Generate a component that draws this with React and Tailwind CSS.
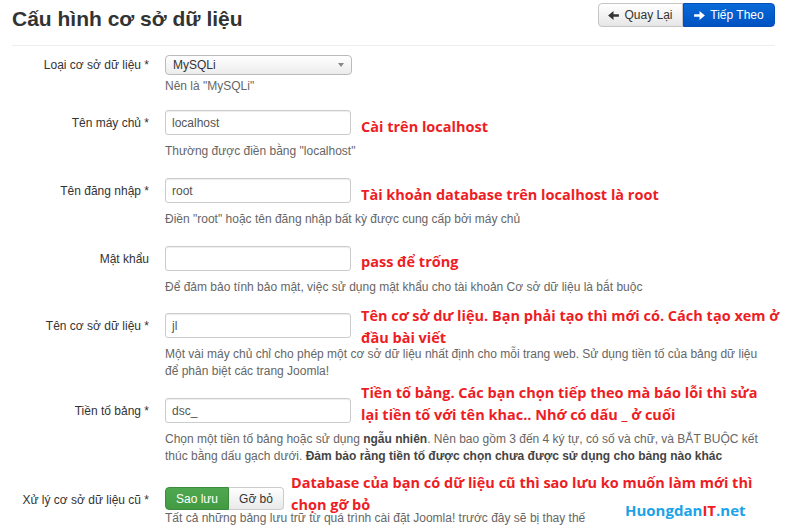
import React from "react";

/* ================= SMALL PIECES ================= */
function ArrowIcon({ dir = "right", className = "" }) {
  return (
    <svg viewBox="0 0 12 10" className={`w-[11px] h-[9px] ${className}`} fill="currentColor">
      {dir === "right" ? (
        <path d="M0 3.5h6V0l6 5-6 5V6.5H0z" />
      ) : (
        <path d="M12 3.5H6V0L0 5l6 5V6.5h6z" />
      )}
    </svg>
  );
}

function Note({ top, left = 196, children }) {
  return (
    <div
      className="absolute whitespace-nowrap text-[14.5px] leading-[22px] font-bold text-[#ee1d25]"
      style={{ top, left, fontFamily: '"Open Sans", "Noto Sans", sans-serif' }}
    >
      {children}
    </div>
  );
}

function Row({ label, children, help, note, noteTop, noteLeft, className = "", helpClass = "mt-[8px]" }) {
  return (
    <div className={`flex ${className}`}>
      <div className="w-[153px] shrink-0 pr-4 text-right text-[12px] text-[#333] flex items-center justify-end h-[25px] whitespace-nowrap">
        {label}
      </div>
      <div className="flex-1">
        <div className="relative">
          {children}
          {note && (
            <Note top={noteTop} left={noteLeft}>
              {note}
            </Note>
          )}
        </div>
        {help && (
          <div className={`${helpClass} text-[12px] leading-[17px] text-[#666]`}>{help}</div>
        )}
      </div>
    </div>
  );
}

function TextInput({ value }) {
  return (
    <div className="w-[186px] h-[25px] border border-[#ccc] rounded-[3px] bg-white px-[6px] flex items-center text-[12px] text-[#555] shadow-[inset_0_1px_1px_rgba(0,0,0,0.075)]">
      {value}
    </div>
  );
}

/* ================= MAIN ================= */
export default function App() {
  return (
    <div
      className="w-[800px] h-[527px] bg-white overflow-hidden relative"
      style={{ fontFamily: '"Liberation Sans", Arial, sans-serif' }}
    >
      <div className="ml-3 w-[763px]">
        {/* HEADER */}
        <div className="flex justify-between items-start h-[46px] border-b border-[#eee] pt-[3px]">
          <h1 className="text-[21px] leading-[24px] font-bold text-[#333] mt-[4px]">
            Cấu hình cơ sở dữ liệu
          </h1>
          <div className="flex text-[12px]">
            <button className="h-[24px] w-[85px] flex items-center justify-center gap-[5px] border border-[#c5c5c5] rounded-l-[4px] bg-gradient-to-b from-white to-[#e6e6e6] text-[#333]">
              <ArrowIcon dir="left" />
              Quay Lại
            </button>
            <button className="h-[24px] w-[92px] flex items-center justify-center gap-[5px] border border-[#0050b8] rounded-r-[4px] bg-gradient-to-b from-[#0a6ad8] to-[#0052c2] text-white">
              <ArrowIcon />
              Tiếp Theo
            </button>
          </div>
        </div>

        {/* FORM */}
        <div className="flex mt-[9px]">
          <div className="w-[153px] shrink-0 pr-4 text-right text-[12px] text-[#333] flex items-center justify-end h-[20px] whitespace-nowrap">
            Loại cơ sở dữ liệu *
          </div>
          <div>
            <div className="w-[187px] h-[20px] border border-[#bbb] rounded-[4px] bg-gradient-to-b from-white to-[#ececec] flex items-center justify-between px-[7px] text-[12px] text-[#333]">
              MySQLi
              <span className="w-0 h-0 border-l-[3px] border-r-[3px] border-t-[4px] border-l-transparent border-r-transparent border-t-[#888]" />
            </div>
            <div className="mt-[3px] text-[12px] leading-[17px] text-[#666]">Nên là "MySQLi"</div>
          </div>
        </div>

        <Row
          className="mt-[15px]"
          label="Tên máy chủ *"
          help='Thường được điền bằng "localhost"'
          note="Cài trên localhost"
          noteTop={6}
        >
          <TextInput value="localhost" />
        </Row>

        <Row
          className="mt-[18px]"
          label="Tên đăng nhập *"
          help='Điền "root" hoặc tên đăng nhập bất kỳ được cung cấp bởi máy chủ'
          note="Tài khoản database trên localhost là root"
          noteTop={6}
        >
          <TextInput value="root" />
        </Row>

        <Row
          className="mt-[18px]"
          label="Mật khẩu"
          help="Để đảm bảo tính bảo mật, việc sử dụng mật khẩu cho tài khoản Cơ sở dữ liệu là bắt buộc"
          note="pass để trống"
          noteTop={5}
        >
          <TextInput value="" />
        </Row>

        <Row
          className="mt-[17px]"
          label="Tên cơ sở dữ liệu *"
          help={
            <>
              Một vài máy chủ chỉ cho phép một cơ sở dữ liệu nhất định cho mỗi trang web. Sử dụng tiền tố của bảng dữ liệu
              <br />
              để phân biệt các trang Joomla!
            </>
          }
          note={
            <>
              Tên cơ sở dư liệu. Bạn phải tạo thì mới có. Cách tạo xem ở
              <br />
              đầu bài viết
            </>
          }
          noteTop={-8}
        >
          <TextInput value="jl" />
        </Row>

        <Row
          className="mt-[18px]"
          label="Tiền tố bảng *"
          help={
            <>
              Chọn một tiền tố bảng hoặc sử dụng <b className="text-[#444]">ngẫu nhiên</b>. Nên bao gồm 3 đến 4 ký tự, có số và chữ, và BẮT BUỘC kết
              <br />
              thúc bằng dấu gạch dưới. <b className="text-[#444]">Đảm bảo rằng tiền tố được chọn chưa được sử dụng cho bảng nào khác</b>
            </>
          }
          note={
            <>
              Tiền tố bảng. Các bạn chọn tiếp theo mà báo lỗi thì sửa
              <br />
              lại tiền tố với tên khac.. Nhớ có dấu _ ở cuối
            </>
          }
          noteTop={-16}
        >
          <TextInput value="dsc_" />
        </Row>

        <Row
          className="mt-[22px]"
          label="Xử lý cơ sở dữ liệu cũ *"
          help="Tất cả những bảng lưu trữ từ quá trình cài đặt Joomla! trước đây sẽ bị thay thế"
          helpClass="mt-0"
          note={
            <>
              Database của bạn có dữ liệu cũ thì sao lưu ko muốn làm mới thì
              <br />
              chọn gỡ bỏ
            </>
          }
          noteTop={-15}
          noteLeft={126}
        >
          <div className="flex h-[23px] text-[12px]">
            <div className="w-[64px] flex items-center justify-center rounded-l-[4px] border border-[#3d8b3d] bg-gradient-to-b from-[#4fa84f] to-[#439a43] text-white">
              Sao lưu
            </div>
            <div className="w-[55px] flex items-center justify-center rounded-r-[4px] border border-l-0 border-[#ccc] bg-gradient-to-b from-white to-[#e9e9e9] text-[#333]">
              Gỡ bỏ
            </div>
          </div>
        </Row>
      </div>

      {/* WATERMARK */}
      <div
        className="absolute left-[625px] top-[500px] text-[15px] leading-[20px] font-bold text-[#1aa3e8]"
        style={{ fontFamily: '"Open Sans", "Noto Sans", sans-serif' }}
      >
        Huongdan<span className="text-[#ee1d25]">IT</span>.net
      </div>
    </div>
  );
}
